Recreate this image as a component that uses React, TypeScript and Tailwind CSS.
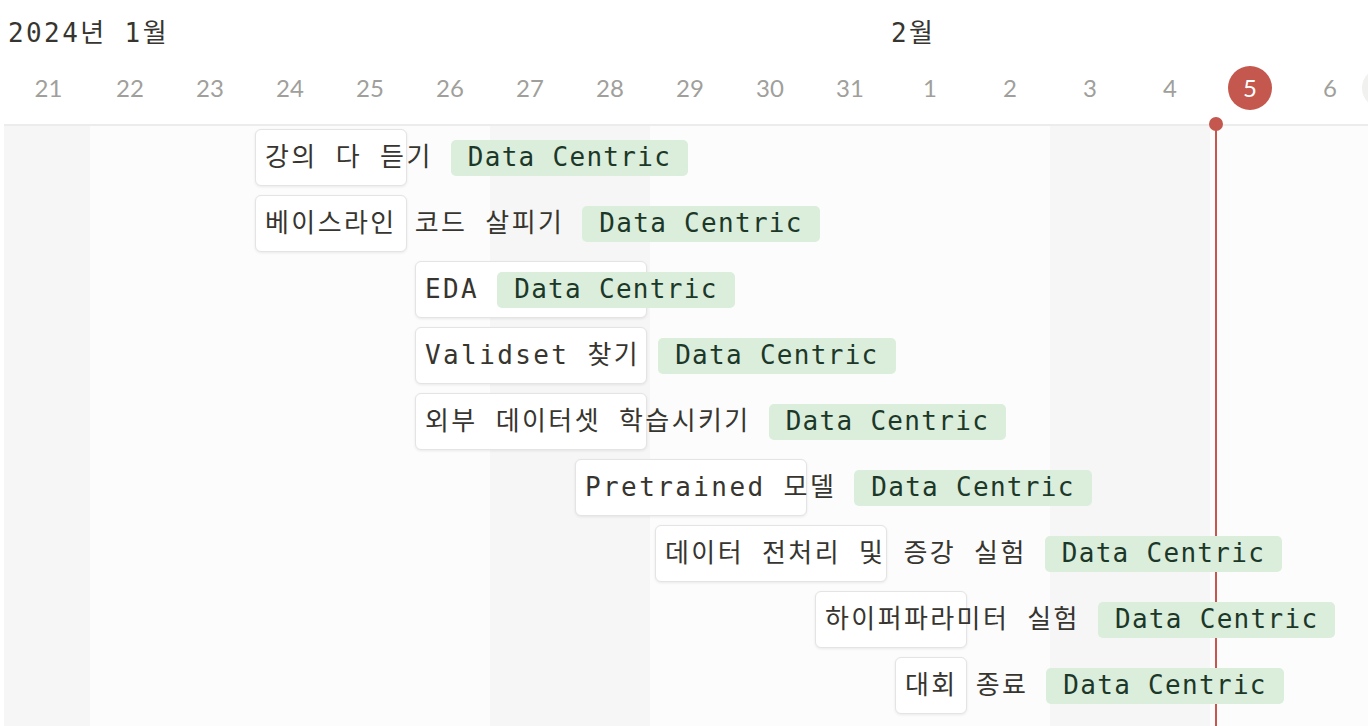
const DAYS = ["21", "22", "23", "24", "25", "26", "27", "28", "29", "30", "31", "1", "2", "3", "4", "5", "6"];
const WEEKENDS = new Set([0, 6, 7, 13, 14]);
const TODAY = 15;

type Task = { title: string; col: string; width: string };

// col = grid column of the start day, width = card width for its span
const TASKS: Task[] = [
  { title: "강의 다 듣기", col: "col-start-4", width: "w-[152px]" },
  { title: "베이스라인 코드 살피기", col: "col-start-4", width: "w-[152px]" },
  { title: "EDA", col: "col-start-6", width: "w-[232px]" },
  { title: "Validset 찾기", col: "col-start-6", width: "w-[232px]" },
  { title: "외부 데이터셋 학습시키기", col: "col-start-6", width: "w-[232px]" },
  { title: "Pretrained 모델", col: "col-start-8", width: "w-[232px]" },
  { title: "데이터 전처리 및 증강 실험", col: "col-start-9", width: "w-[232px]" },
  { title: "하이퍼파라미터 실험", col: "col-start-11", width: "w-[152px]" },
  { title: "대회 종료", col: "col-start-12", width: "w-[72px]" },
];

const mono = "font-['DejaVu_Sans_Mono','Noto_Sans_CJK_KR',monospace] text-[26px]";
const cols = "grid grid-cols-[86px_repeat(16,80px)]";

export default function App() {
  return (
    <main className="relative h-[726px] w-[1368px] overflow-hidden bg-white text-[#37352f]">
      <div className="ml-[4px] w-[1364px]">
        <header className="border-b-2 border-[#ececeb] bg-white">
          <div className={`${cols} h-[66px] items-center`}>
            <span className={`col-start-1 whitespace-nowrap pl-[4px] tracking-[2.4px] ${mono}`}>2024년 1월</span>
            <span className={`col-start-12 whitespace-nowrap pl-[1px] tracking-[2.4px] ${mono}`}>2월</span>
          </div>
          <div className={`${cols} mb-[14px] h-[44px] items-center`}>
            {DAYS.map((d, i) => (
              <div key={i} className={`flex items-center justify-center ${i === 0 ? "pl-[3px]" : ""}`}>
                {i === TODAY ? (
                  <span className="flex h-[44px] w-[44px] items-center justify-center rounded-full bg-[#c4574e] font-['Lato',sans-serif] text-[24px] text-white">{d}</span>
                ) : (
                  <span className="font-['Lato',sans-serif] text-[24px] text-[#a09f9c]">{d}</span>
                )}
              </div>
            ))}
          </div>
        </header>

        <section className="relative h-[600px]">
          <div className={`absolute inset-0 ${cols}`}>
            {DAYS.map((d, i) => (
              <div key={d + i} className={WEEKENDS.has(i) ? "bg-[#f6f6f6]" : "bg-[#fcfcfc]"} />
            ))}
          </div>
          <div className="absolute bottom-0 left-[1211px] top-0 w-[2px] bg-[#c4574e]" />

          <div className="relative flex flex-col gap-[9px] pt-[3px]">
            {TASKS.map((t) => (
              <div key={t.title} className={`${cols} h-[57px]`}>
                <div className={`${t.col} relative flex h-full items-center whitespace-nowrap`}>
                  <div className={`absolute left-[5px] top-0 h-full ${t.width} rounded-[6px] border border-[#e4e4e3] bg-white shadow-[0_1px_3px_rgba(15,15,15,0.08)]`} />
                  <span className={`relative pl-[15px] tracking-[2.4px] ${mono}`}>{t.title}</span>
                  <span className={`relative ml-[18px] flex h-[36px] items-center rounded-[5px] bg-[#dbeddb] px-[17px] tracking-[1.3px] text-[#1c3829] ${mono}`}>Data Centric</span>
                </div>
              </div>
            ))}
          </div>
        </section>
      </div>

      {/* today marker dot + right edge button */}
      <div className="absolute left-[1209px] top-[117px] h-[14px] w-[14px] rounded-full bg-[#c4574e]" />
      <div className="absolute left-[1362px] top-[68px] h-[40px] w-[40px] rounded-full bg-[#f1f1ef]" />
    </main>
  );
}
